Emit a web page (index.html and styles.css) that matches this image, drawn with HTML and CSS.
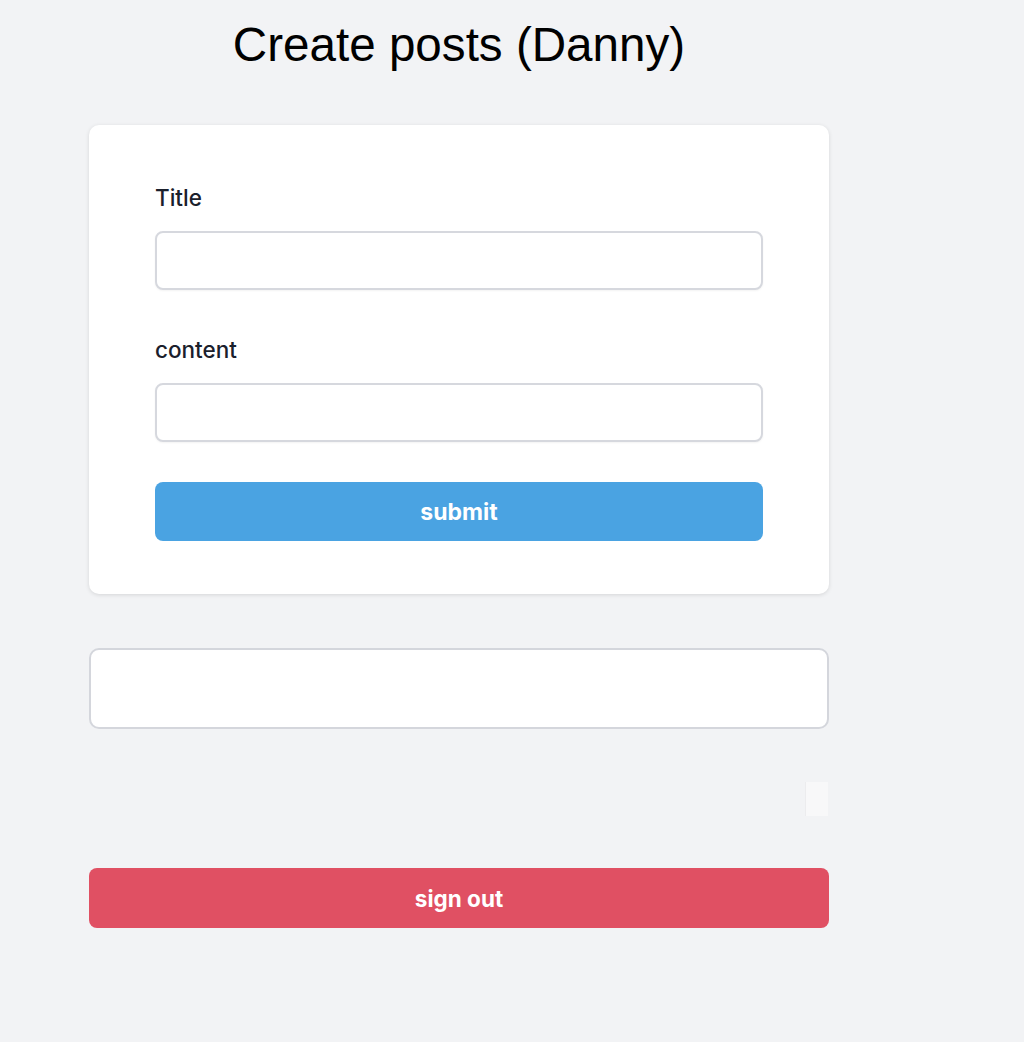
FILE: index.html
```html
<!DOCTYPE html>
<html>
<head>
<meta charset="utf-8">
<link rel="stylesheet" href="styles.css">
</head>
<body>
<main class="page">
  <h1 class="heading">Create posts (Danny)</h1>
  <form class="card">
    <label class="label">Title</label>
    <input class="field" type="text">
    <label class="label label-second">content</label>
    <input class="field" type="text">
    <button type="button" class="btn btn-submit">submit</button>
  </form>
  <div class="posts"></div>
  <div class="tiny-row"><div class="tiny"></div></div>
  <button type="button" class="btn btn-signout">sign out</button>
</main>
</body>
</html>
```
FILE: styles.css
```css
html, body {
  margin: 0;
  padding: 0;
  background: #f2f3f5;
}
body {
  font-family: Inter, "Noto Sans", sans-serif;
}
.page {
  width: 740px;
  margin-left: 89px;
  display: flex;
  flex-direction: column;
}
.heading {
  margin: 16px 0 0 0;
  height: 109px;
  text-align: center;
  font-family: "Liberation Sans", Arial, sans-serif;
  font-weight: 400;
  font-size: 47.6px;
  line-height: 58px;
  color: #000;
}
.card {
  background: #fff;
  border-radius: 10px;
  box-shadow: 0 1px 4px rgba(0,0,0,0.12);
  padding: 60px 66px 53px 66px;
  display: flex;
  flex-direction: column;
  height: 469px;
  box-sizing: border-box;
  margin: 0;
}
.label {
  font-size: 22.5px;
  font-weight: 500;
  color: #1a202c;
  line-height: 26px;
  margin-bottom: 20px;
}
.label-second {
  margin-top: 47px;
}
.field {
  height: 59px;
  box-sizing: border-box;
  border: 2px solid #d6d8de;
  border-radius: 8px;
  background: #fff;
  margin: 0;
  box-shadow: 0 1px 2px rgba(0,0,0,0.05);
}
.btn {
  border: none;
  border-radius: 8px;
  color: #fff;
  font-family: Inter, "Noto Sans", sans-serif;
  font-weight: 700;
  font-size: 23px;
  height: 59px;
  cursor: pointer;
  padding: 0;
}
.btn-submit {
  margin-top: 40px;
  background: #4aa3e2;
}
.posts {
  margin-top: 54px;
  height: 81px;
  box-sizing: border-box;
  background: #fff;
  border: 2px solid #d4d6dc;
  border-radius: 10px;
}
.tiny-row {
  margin-top: 53px;
  display: flex;
  justify-content: flex-end;
}
.tiny {
  width: 23px;
  height: 34px;
  margin-right: 1px;
  background: #f8f8f9;
  border-left: 1px solid #ececee;
  box-sizing: border-box;
}
.btn-signout {
  margin-top: 52px;
  height: 60px;
  font-size: 22.5px;
  background: #e05063;
}
```
